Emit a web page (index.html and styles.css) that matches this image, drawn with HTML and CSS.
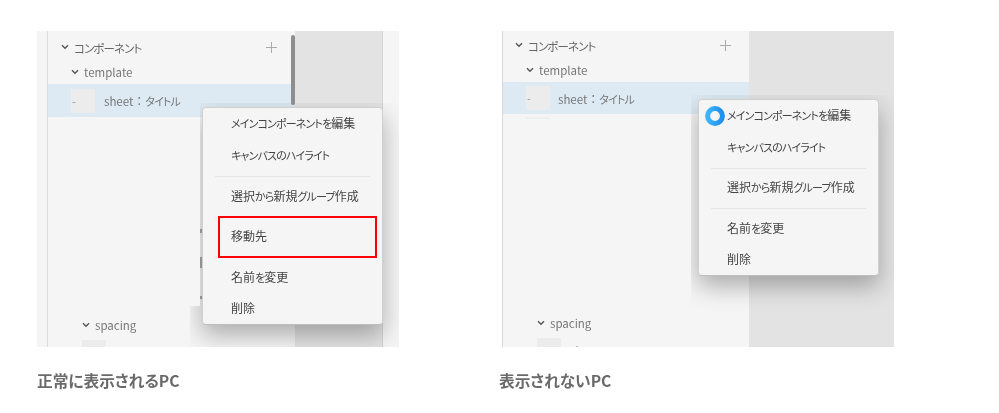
FILE: index.html
```html
<!DOCTYPE html>
<html lang="ja">
<head>
<meta charset="utf-8">
<title>表示比較</title>
<link rel="stylesheet" href="styles.css">
</head>
<body>
<main class="page">
  <figure class="shot shot-a">
    <div class="frame frame-a">
      <div class="gutter"></div>
      <section class="sidebar sidebar-a">
        <div class="row row-root">
          <svg class="chev" viewBox="0 0 8 6"><path d="M1 1.2 4 4.2 7 1.2"/></svg>
          <span class="jp"><span class="kana">コンポーネント</span></span>
          <svg class="plus" viewBox="0 0 11 11"><path d="M5.5 0V11M0 5.5H11"/></svg>
        </div>
        <div class="row row-group">
          <svg class="chev" viewBox="0 0 8 6"><path d="M1 1.2 4 4.2 7 1.2"/></svg>
          <span>template</span>
        </div>
        <div class="row row-selected">
          <span class="thumb">-</span>
          <span class="sheet">sheet<span class="colon">：</span><span class="kana">タイトル</span></span>
        </div>
        <div class="row row-spacing row-spacing-a">
          <svg class="chev" viewBox="0 0 8 6"><path d="M1 1.2 4 4.2 7 1.2"/></svg>
          <span>spacing</span>
        </div>
        <div class="thumb thumb-small"></div>
      </section>
      <div class="scrollbar"></div>
      <div class="canvas canvas-a"></div>
      <div class="edge"></div>
      <span class="tick tick-1"></span>
      <span class="tick tick-2"></span>
      <span class="tick tick-3"></span>
      <div class="menu menu-a">
        <div class="item"><span class="kana">メインコンポーネントを</span>編集</div>
        <div class="item"><span class="kana">キャンバスのハイライト</span></div>
        <hr class="sep">
        <div class="item">選択<span class="kana">から</span>新規<span class="kana">グループ</span>作成</div>
        <hr class="sep">
        <div class="item">移動先</div>
        <hr class="sep">
        <div class="item">名前<span class="kana">を</span>変更</div>
        <div class="item">削除</div>
      </div>
      <div class="highlight"></div>
    </div>
    <figcaption class="caption">正常に表示されるPC</figcaption>
  </figure>
  <figure class="shot shot-b">
    <div class="frame frame-b">
      <section class="sidebar sidebar-b">
        <div class="row row-root">
          <svg class="chev" viewBox="0 0 8 6"><path d="M1 1.2 4 4.2 7 1.2"/></svg>
          <span class="jp"><span class="kana">コンポーネント</span></span>
          <svg class="plus" viewBox="0 0 11 11"><path d="M5.5 0V11M0 5.5H11"/></svg>
        </div>
        <div class="row row-group">
          <svg class="chev" viewBox="0 0 8 6"><path d="M1 1.2 4 4.2 7 1.2"/></svg>
          <span>template</span>
        </div>
        <div class="row row-selected">
          <span class="thumb">-</span>
          <span class="sheet">sheet<span class="colon">：</span><span class="kana">タイトル</span></span>
        </div>
        <div class="thumb-sliver"></div>
        <div class="row row-spacing row-spacing-b">
          <svg class="chev" viewBox="0 0 8 6"><path d="M1 1.2 4 4.2 7 1.2"/></svg>
          <span>spacing</span>
        </div>
        <div class="row row-sheet-cut">
          <span class="thumb thumb-small"></span>
          <span class="sheet">sheet<span class="colon">：</span>25</span>
        </div>
      </section>
      <div class="canvas canvas-b"></div>
      <div class="menu menu-b">
        <div class="item"><span class="kana">メインコンポーネントを</span>編集</div>
        <div class="item"><span class="kana">キャンバスのハイライト</span></div>
        <hr class="sep">
        <div class="item">選択<span class="kana">から</span>新規<span class="kana">グループ</span>作成</div>
        <hr class="sep">
        <div class="item">名前<span class="kana">を</span>変更</div>
        <div class="item">削除</div>
      </div>
      <svg class="spinner" viewBox="0 0 20 20">
        <defs>
          <linearGradient id="ring" x1="0" y1="0" x2="1" y2="0">
            <stop offset="0" stop-color="#3fb4fb"/>
            <stop offset="1" stop-color="#1f8fee"/>
          </linearGradient>
        </defs>
        <circle cx="10" cy="10" r="7.4"/>
      </svg>
    </div>
    <figcaption class="caption">表示されないPC</figcaption>
  </figure>
</main>
</body>
</html>
```
FILE: styles.css
```css
* { box-sizing: border-box; }
html, body { margin: 0; padding: 0; background: #fff; }
body { width: 999px; height: 413px; overflow: hidden; font-family: "Noto Sans CJK JP", "Noto Sans", sans-serif; color: #555; }
.kana { font-size: 11px; letter-spacing: -.85px; font-feature-settings: "palt"; }
.colon { font-size: 12px; }
.page { display: flex; align-items: flex-start; padding: 31px 0 0 37px; }
.shot { margin: 0; }
.shot-a { width: 362px; }
.shot-b { width: 392px; margin-left: 103px; }
.frame { position: relative; height: 316px; display: flex; overflow: hidden; background: #f5f5f5; filter: blur(.35px); }
.frame-a { width: 362px; }
.frame-b { width: 392px; border-left: 1px solid #d8d8d8; }
.gutter { width: 11px; flex: none; border-right: 1px solid #dcdcdc; }
.sidebar { flex: none; display: flex; flex-direction: column; font-size: 11.5px; color: #777; }
.sidebar > * { flex: none; }
.sidebar-a { width: 247px; padding-top: 3px; }
.sidebar-b { width: 246px; padding-top: 1px; }
.row { display: flex; align-items: center; white-space: nowrap; }
.chev { width: 8px; height: 6px; flex: none; fill: none; stroke: #555; stroke-width: 1.4; }
.row-root { height: 26px; gap: 5px; }
.sidebar-a .row-root { padding-left: 13px; }
.sidebar-b .row-root { padding-left: 12px; }
.jp { font-size: 12px; color: #666; }
.jp .kana { font-size: 11.5px; letter-spacing: -.9px; }
.plus { width: 11px; height: 11px; flex: none; margin-left: auto; margin-right: 18px; fill: none; stroke: #aaa; stroke-width: 1; }
.row-group { height: 24px; padding-left: 23px; gap: 5px; }
.row-selected { background: #ddeaf3; padding-left: 23px; }
.sidebar-a .row-selected { height: 33px; }
.sidebar-b .row-selected { height: 32px; }
.thumb { width: 24px; height: 24px; background: #ececec; color: #999; display: flex; align-items: center; font-size: 11px; padding-left: 1px; flex: none; }
.sheet { margin-left: 9px; font-size: 11.5px; color: #777; }
.sidebar-b .sheet { margin-left: 8px; }
.thumb-sliver { width: 24px; height: 2px; margin: 3px 0 0 23px; background: #eeeeee; }
.row-spacing { height: 20px; gap: 5px; padding-left: 34px; }
.row-spacing-a { margin-top: 198px; }
.row-spacing-b { margin-top: 194px; }
.thumb-small { margin: 5px 0 0 34px; }
.row-sheet-cut .sheet { margin-top: 5px; margin-left: 9px; }
.scrollbar { position: absolute; left: 254px; top: 4px; width: 3.5px; height: 70px; border-radius: 2px; background: #8e8e8e; }
.canvas { flex: 1; background: #e3e3e3; }
.canvas-a { flex: none; width: 87px; }
.edge { flex: 1; border-left: 1px solid #d4d4d4; }
.tick { position: absolute; left: 163px; width: 2px; background: #a8a8a8; }
.tick-1 { top: 198px; height: 4px; }
.tick-2 { top: 226px; height: 11px; }
.tick-3 { top: 265px; height: 3px; }
.menu { position: absolute; background: #f5f5f5; border-radius: 4px; border: 1px solid #d0d0d0; border-bottom-color: #bdbdbd; box-shadow: 0 10px 24px rgba(0,0,0,.3); font-size: 12px; color: #444; }
.menu-a { left: 165px; top: 76px; width: 181px; height: 218px; clip-path: polygon(-2px -4px, 240px -4px, 240px 270px, -12px 270px, -12px 199px, -2px 199px); }
.menu-b { left: 195px; top: 68px; width: 181px; height: 177px; clip-path: polygon(-7px -4px, 240px -4px, 240px 240px, -7px 240px); }
.item { height: 31px; line-height: 29px; padding-left: 28px; white-space: nowrap; }
.menu .item:nth-child(2) { margin-top: 1px; }
.sep { height: 1px; margin: 5px 12px 4px; border: 0; background: #e6e6e6; }
.menu-a .sep:nth-child(5) { margin-bottom: 3px; }
.menu-b .sep:nth-child(3) { margin-bottom: 3px; }
.highlight { position: absolute; left: 181px; top: 185px; width: 159px; height: 42px; border: 2px solid #f00; }
.spinner { position: absolute; left: 202px; top: 75px; width: 20px; height: 20px; fill: #f6f6f6; stroke: url(#ring); stroke-width: 5; }
.caption { margin-top: 24px; font-size: 15.7px; line-height: 20px; font-weight: 700; color: #6a6a6a; font-feature-settings: "palt"; filter: blur(.3px); }
.shot-b .caption { margin-left: -3px; }
```
